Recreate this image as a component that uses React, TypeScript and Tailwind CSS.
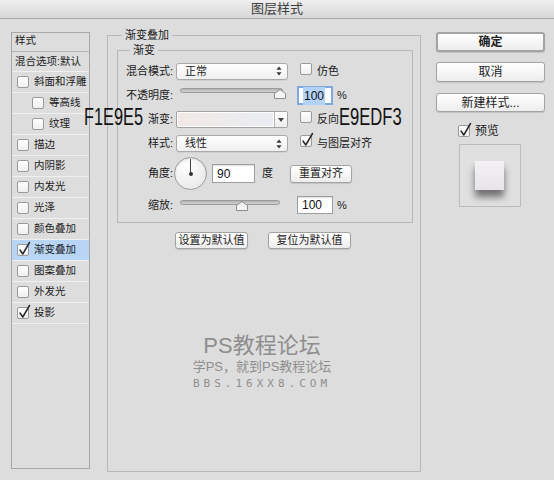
import React from 'react';

const layerItems = [
  { name: '斜面和浮雕', sub: false, checked: false },
  { name: '等高线', sub: true, checked: false },
  { name: '纹理', sub: true, checked: false },
  { name: '描边', sub: false, checked: false },
  { name: '内阴影', sub: false, checked: false },
  { name: '内发光', sub: false, checked: false },
  { name: '光泽', sub: false, checked: false },
  { name: '颜色叠加', sub: false, checked: false },
  { name: '渐变叠加', sub: false, checked: true, active: true },
  { name: '图案叠加', sub: false, checked: false },
  { name: '外发光', sub: false, checked: false },
  { name: '投影', sub: false, checked: true },
];

function Check({ checked = false }: { checked?: boolean }) {
  return (
    <span className="relative inline-block w-[12px] h-[12px] shrink-0 rounded-[2px] border border-[#9a9a9a] bg-gradient-to-b from-white to-[#efefef]">
      {checked && (
        <svg className="absolute left-[0px] -top-[4px] overflow-visible" width="13" height="15" viewBox="0 0 13 15">
          <path d="M2 9 L4.8 13 L11.5 1.5" fill="none" stroke="#2a2a2a" strokeWidth="1.5" strokeLinecap="round" strokeLinejoin="round" />
        </svg>
      )}
    </span>
  );
}

function UpDown() {
  return (
    <svg width="6" height="10" viewBox="0 0 6 10">
      <path d="M3 0.5 L5.6 3.8 H0.4 Z M3 9.5 L5.6 6.2 H0.4 Z" fill="#3a3a3a" />
    </svg>
  );
}

function Select({ value }: { value: string }) {
  return (
    <div className="flex items-center justify-between w-[112px] h-[17px] pl-[8px] pr-[5px] rounded-[3px] border border-[#a9a9a9] bg-gradient-to-b from-white to-[#f0f0f0] shadow-[0_1px_0_rgba(0,0,0,0.06)]">
      <span>{value}</span>
      <UpDown />
    </div>
  );
}

function Thumb({ left }: { left: number }) {
  return (
    <svg className="absolute top-[2px]" style={{ left: left - 6 }} width="12" height="10" viewBox="0 0 12 10">
      <path d="M6 0.5 L11.5 4.5 V9.5 H0.5 V4.5 Z" fill="#f4f4f4" stroke="#8c8c8c" />
    </svg>
  );
}

function Input({ value, className = '', focused = false }: { value: string; className?: string; focused?: boolean }) {
  return (
    <div
      className={
        'flex items-center bg-white pl-[4px] font-["Liberation_Sans",sans-serif] text-[12px] text-[#111] ' +
        (focused
          ? 'border-2 border-[#7fa8de] pl-[3px] '
          : 'border border-[#9e9e9e] shadow-[inset_0_1px_1px_rgba(0,0,0,0.12)] ') +
        className
      }
    >
      <span className={focused ? 'bg-[#b3d2f8] px-[1px]' : ''}>{value}</span>
    </div>
  );
}

function Button({ label, className = '' }: { label: string; className?: string }) {
  return (
    <div
      className={
        'flex items-center justify-center rounded-[3px] border border-[#a3a3a3] bg-gradient-to-b from-white to-[#ededed] shadow-[0_1px_1px_rgba(0,0,0,0.12)] text-[#222] ' +
        className
      }
    >
      {label}
    </div>
  );
}

function Label({ text }: { text: string }) {
  return <span className="w-[58px] shrink-0 text-right pr-[3px]">{text}</span>;
}

function LayerPanel() {
  return (
    <div className="w-[79px] h-[437px] shrink-0 border border-[#a7a7a7] flex flex-col text-[10.5px]">
      <div className="h-[19px] shrink-0 border-b border-[#b3b3b3] pl-[3px] pb-[2px] flex items-center">样式</div>
      <div className="h-[20px] shrink-0 border-b border-[#f0f0f0] pl-[3px] flex items-center whitespace-nowrap">混合选项:默认</div>
      {layerItems.map((item) => (
        <div
          key={item.name}
          className={
            'h-[21px] shrink-0 border-b border-[#f0f0f0] flex items-center gap-[5px] ' +
            (item.sub ? 'pl-[20px] ' : 'pl-[5px] ') +
            (item.active ? 'bg-[#b8d5f6]' : '')
          }
        >
          <Check checked={item.checked} />
          <span className="whitespace-nowrap">{item.name}</span>
        </div>
      ))}
    </div>
  );
}

function GradientGroup() {
  return (
    <fieldset className="ml-[9px] mt-[1px] w-[296px] border border-[#b7b7b7] pb-[8px]">
      <legend className="ml-[12px] px-[3px] leading-[14px]">渐变</legend>

      <div className="mt-[5px] h-[18px] flex items-center">
        <Label text="混合模式:" />
        <Select value="正常" />
        <span className="ml-[12px]"><Check /></span>
        <span className="ml-[5px]">仿色</span>
      </div>

      <div className="mt-[6px] h-[19px] flex items-center">
        <Label text="不透明度:" />
        <div className="relative w-[112px] h-[14px] self-start mt-[1px]">
          <div className="absolute left-[4px] w-[103px] top-[1px] h-[5px] rounded-full border border-[#9a9a9a] bg-gradient-to-b from-[#b2b2b2] to-[#d4d4d4]" />
          <Thumb left={104} />
        </div>
        <Input value="100" focused className="ml-[9px] w-[36px] h-[19px]" />
        <span className="ml-[4px]">%</span>
      </div>

      <div className="mt-[5px] h-[19px] flex items-center">
        <Label text="渐变:" />
        <div className="flex w-[112px] h-[17px] border border-[#a3a3a3] rounded-[2px] bg-white">
          <div className="flex-1 m-[1px] bg-gradient-to-r from-[#F1E9E5] to-[#E9EDF3]" />
          <div className="w-[13px] border-l border-[#b5b5b5] flex items-center justify-center bg-gradient-to-b from-white to-[#eeeeee]">
            <svg width="6" height="4" viewBox="0 0 6 4"><path d="M0 0 H6 L3 4 Z" fill="#444" /></svg>
          </div>
        </div>
        <span className="ml-[12px]"><Check /></span>
        <span className="ml-[5px]">反向</span>
      </div>

      <div className="mt-[5px] h-[19px] flex items-center">
        <Label text="样式:" />
        <Select value="线性" />
        <span className="ml-[12px]"><Check checked /></span>
        <span className="ml-[5px]">与图层对齐</span>
      </div>

      <div className="mt-[4px] h-[33px] flex items-center">
        <Label text="角度:" />
        <div className="relative -ml-[2px] w-[33px] h-[33px] rounded-full border border-[#9c9c9c] bg-[radial-gradient(circle_at_40%_30%,#ffffff,#e4e4e4)] shadow-[inset_0_1px_2px_rgba(0,0,0,0.1)]">
          <div className="absolute left-[15px] top-[1px] w-[1px] h-[15px] bg-[#444]" />
          <div className="absolute left-[13.5px] top-[14px] w-[4px] h-[4px] rounded-full bg-[#333]" />
        </div>
        <Input value="90" className="ml-[5px] w-[43px] h-[19px]" />
        <span className="ml-[7px]">度</span>
        <Button label="重置对齐" className="ml-[17px] w-[62px] h-[18px]" />
      </div>

      <div className="mt-[6px] h-[18px] flex items-center">
        <Label text="缩放:" />
        <div className="relative w-[112px] h-[14px] self-start mt-[3px]">
          <div className="absolute left-[4px] w-[100px] top-[1px] h-[5px] rounded-full border border-[#9a9a9a] bg-gradient-to-b from-[#b2b2b2] to-[#d4d4d4]" />
          <Thumb left={66} />
        </div>
        <Input value="100" className="ml-[9px] w-[36px] h-[18px]" />
        <span className="ml-[4px]">%</span>
      </div>
    </fieldset>
  );
}

export default function App() {
  return (
    <div className="relative w-[554px] h-[480px] overflow-hidden bg-[#dddddd] text-[11px] text-[#1a1a1a] font-['Liberation_Sans','Noto_Sans_CJK_SC',sans-serif]">
      <div className="h-[19px] border-b border-[#a6a6a6] bg-gradient-to-b from-[#efefef] to-[#d6d6d6] flex items-center justify-center text-[13px] text-[#404040]">
        图层样式
      </div>

      <div className="flex items-start pl-[11px] pt-[13px]">
        <LayerPanel />

        <fieldset className="ml-[17px] -mt-[4px] w-[314px] h-[444px] shrink-0 border border-[#b7b7b7]">
          <legend className="ml-[14px] px-[3px] leading-[14px]">渐变叠加</legend>
          <GradientGroup />

          <div className="mt-[9px] flex">
            <Button label="设置为默认值" className="ml-[67px] w-[73px] h-[17px]" />
            <Button label="复位为默认值" className="ml-[20px] w-[83px] h-[17px]" />
          </div>

          <div className="mt-[84px] pr-[4px] flex flex-col items-center text-[#8e8e8e]">
            <div className="text-[22px] leading-[26px]">PS教程论坛</div>
            <div className="text-[13px] leading-[16px]">学PS，就到PS教程论坛</div>
            <div className="mt-[2px] text-[11px] leading-[14px] tracking-[4px] font-['DejaVu_Sans_Mono',monospace]">BBS.16XX8.COM</div>
          </div>
        </fieldset>

        <div className="ml-[15px] w-[109px] shrink-0 flex flex-col text-[12px]">
          <Button label="确定" className="h-[20px] border-2 border-[#6c6c6c] font-semibold" />
          <Button label="取消" className="mt-[10px] h-[20px]" />
          <Button label="新建样式..." className="mt-[11px] h-[19px]" />
          <div className="mt-[13px] ml-[22px] flex items-center gap-[5px] h-[12px]">
            <Check checked />
            <span>预览</span>
          </div>
          <div className="mt-[7px] ml-[23px] w-[62px] h-[63px] border border-[#bcbcbc] bg-[#e0e0e0] pl-[15px] pt-[16px]">
            <div className="w-[29px] h-[29px] bg-gradient-to-b from-[#f3f1f4] to-[#e7e5e9] shadow-[0_7px_7px_rgba(0,0,0,0.5)]" />
          </div>
        </div>
      </div>

      <div className="absolute left-[84px] top-[105px] text-[24px] leading-[24px] text-[#111] origin-left scale-x-[0.68] font-['Liberation_Sans',sans-serif]">
        F1E9E5
      </div>
      <div className="absolute left-[339px] top-[105px] text-[24px] leading-[24px] text-[#111] origin-left scale-x-[0.69] font-['Liberation_Sans',sans-serif]">
        E9EDF3
      </div>
    </div>
  );
}
